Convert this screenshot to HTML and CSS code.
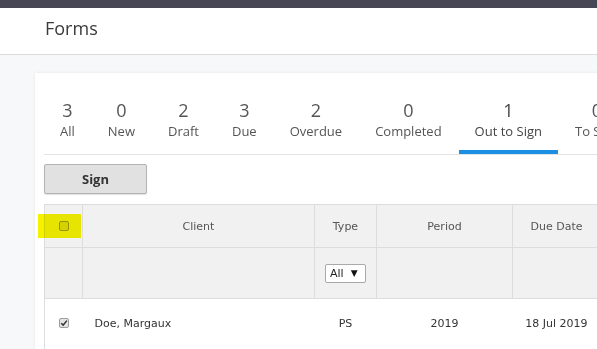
FILE: index.html
```html
<!DOCTYPE html>
<html>
<head>
<meta charset="utf-8">
<link rel="stylesheet" href="styles.css">
</head>
<body>
<div class="topbar"></div>
<header class="page-header"><h1 class="title">Forms</h1></header>
<main class="content">
  <section class="card">
    <nav class="tabs">
      <div class="tab"><span class="num">3</span><span class="lbl">All</span></div>
      <div class="tab"><span class="num">0</span><span class="lbl">New</span></div>
      <div class="tab"><span class="num">2</span><span class="lbl">Draft</span></div>
      <div class="tab"><span class="num">3</span><span class="lbl">Due</span></div>
      <div class="tab"><span class="num">2</span><span class="lbl">Overdue</span></div>
      <div class="tab"><span class="num">0</span><span class="lbl">Completed</span></div>
      <div class="tab active"><span class="num">1</span><span class="lbl">Out to Sign</span></div>
      <div class="tab"><span class="num">0</span><span class="lbl">To Sign</span></div>
    </nav>
    <div class="toolbar"><button class="btn">Sign</button></div>
    <table class="grid">
      <colgroup>
        <col class="c-check"><col class="c-client"><col class="c-type"><col class="c-period"><col class="c-due"><col class="c-more">
      </colgroup>
      <thead>
        <tr class="head-row">
          <th class="check-cell"><span class="highlight"></span><span class="cb"></span></th>
          <th>Client</th>
          <th>Type</th>
          <th>Period</th>
          <th>Due Date</th>
          <th>Status</th>
        </tr>
        <tr class="filter-row">
          <th></th>
          <th></th>
          <th><span class="dropdown">All<span class="arrow">▼</span></span></th>
          <th></th>
          <th></th>
          <th></th>
        </tr>
      </thead>
      <tbody>
        <tr class="data-row">
          <td class="check-cell"><span class="cb checked"><svg viewBox="0 0 10 10" width="8" height="8"><path d="M1.5 5.2 L4 7.6 L8.6 2" fill="none" stroke="#333" stroke-width="1.8"/></svg></span></td>
          <td class="client">Doe, Margaux</td>
          <td>PS</td>
          <td>2019</td>
          <td>18 Jul 2019</td>
          <td></td>
        </tr>
      </tbody>
    </table>
  </section>
</main>
</body>
</html>
```
FILE: styles.css
```css
html, body {
  margin: 0;
  padding: 0;
}
body {
  width: 597px;
  height: 349px;
  overflow: hidden;
  background: #f7f8fa;
  font-family: "Open Sans", sans-serif;
  color: #333;
}
.topbar {
  height: 8px;
  background: #474654;
}
.page-header {
  box-sizing: border-box;
  height: 47px;
  background: #fff;
  border-bottom: 1px solid #dcdcdc;
  padding: 8px 0 0 45px;
}
.title {
  margin: 0;
  font-size: 18px;
  line-height: 24px;
  font-weight: 400;
  color: #3a3a3a;
}
.content {
  padding: 18px 0 0 35px;
}
.card {
  width: 800px;
  height: 400px;
  background: #fff;
  box-shadow: 0 0 3px rgba(0, 0, 0, 0.08);
  padding: 0 0 0 9px;
  box-sizing: border-box;
}
.tabs {
  display: flex;
  gap: 1px;
  padding-top: 25px;
  border-bottom: 1px solid #e4e4e4;
}
.tab {
  flex-shrink: 0;
  display: flex;
  flex-direction: column;
  align-items: center;
  padding: 0 16px 10px;
  border-bottom: 4px solid transparent;
  white-space: nowrap;
  color: #555;
}
.tab .num {
  font-size: 18px;
  line-height: 24px;
}
.tab .lbl {
  font-size: 13px;
  line-height: 18px;
}
.tab.active {
  border-bottom-color: #1a8fe3;
  color: #444;
}
.toolbar {
  padding-top: 9px;
}
.btn {
  box-sizing: border-box;
  width: 103px;
  height: 30px;
  background: #e1e1e1;
  border: 1px solid #b3b3b3;
  border-radius: 2px;
  box-shadow: 0 1px 1px rgba(0, 0, 0, 0.12);
  font-family: "Open Sans", sans-serif;
  font-size: 13px;
  font-weight: 700;
  color: #333;
  padding: 0;
}
.grid {
  margin-top: 10px;
  border-collapse: collapse;
  table-layout: fixed;
  width: 700px;
  font-family: "DejaVu Sans", Verdana, sans-serif;
  font-size: 11px;
}
.c-check { width: 38px; }
.c-client { width: 232px; }
.c-type { width: 62px; }
.c-period { width: 136px; }
.c-due { width: 88px; }
.grid th {
  background: #f1f1f1;
  border: 1px solid #dddddd;
  font-weight: 400;
  color: #555;
  text-align: center;
  padding: 0;
}
.head-row { height: 43px; }
.filter-row { height: 51px; }
.data-row { height: 50px; }
.grid td {
  text-align: center;
  color: #333;
  padding: 0;
}
.grid tbody tr td:first-child {
  border-left: 1px solid #dddddd;
}
.grid td.client {
  text-align: left;
  padding-left: 12px;
}
.check-cell {
  position: relative;
}
.cb {
  display: inline-block;
  box-sizing: border-box;
  width: 10px;
  height: 10px;
  border: 1px solid #9c9c9c;
  border-radius: 2px;
  background: #dedede;
  vertical-align: middle;
  position: relative;
  top: -1px;
}
.cb.checked {
  display: inline-flex;
  align-items: center;
  justify-content: center;
  background: #e4e4e4;
}
.cb.checked svg {
  display: block;
}
.highlight {
  position: absolute;
  left: -7px;
  top: 9px;
  width: 43px;
  height: 24px;
  background: #f5f200;
  mix-blend-mode: multiply;
  z-index: 1;
}
.dropdown {
  display: inline-flex;
  align-items: center;
  box-sizing: border-box;
  width: 41px;
  height: 19px;
  padding-left: 4px;
  background: #fff;
  border: 1px solid #a9a9a9;
  border-radius: 2px;
  color: #222;
  font-size: 11px;
  text-align: left;
}
.dropdown .arrow {
  font-size: 9px;
  margin-left: 7px;
  color: #111;
}
```
